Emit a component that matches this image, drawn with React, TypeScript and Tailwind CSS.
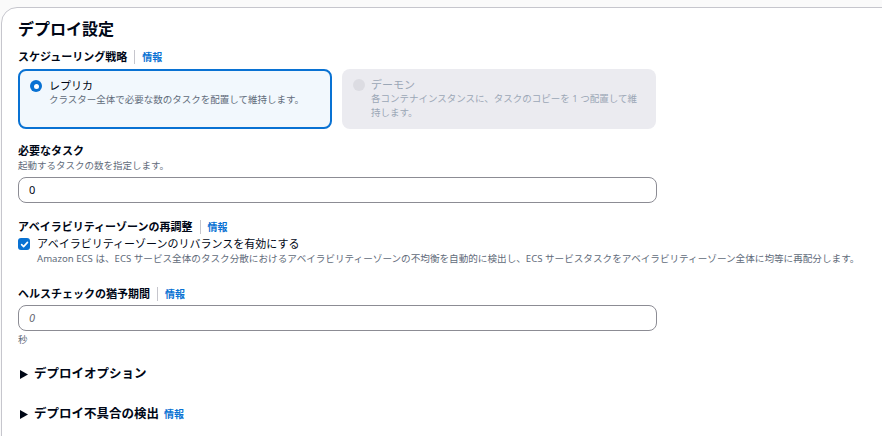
import React from "react";

const font = "font-['Noto_Sans','Noto_Sans_CJK_JP',sans-serif]";

function Info() {
  return (
    <span className="flex items-center">
      <span className="mx-[7px] h-[14px] w-px bg-[#c6c6cd]" />
      <span className="text-[10px] font-bold text-[#0972d3]">情報</span>
    </span>
  );
}

function Label({ text, info }: { text: string; info?: boolean }) {
  return (
    <div className="flex h-[16px] items-center text-[11px] font-bold leading-[16px] text-[#000716]">
      {text}
      {info && <Info />}
    </div>
  );
}

function Expander({ text, info }: { text: string; info?: boolean }) {
  return (
    <div className="flex h-[18px] items-center text-[12.5px] font-bold text-[#000716]">
      <svg width="8" height="9" viewBox="0 0 8 9" className="ml-[2px] mr-[6px]">
        <path d="M0 0 L8 4.5 L0 9 Z" fill="#000716" />
      </svg>
      {text}
      {info && <span className="ml-[5px] text-[10px] font-bold text-[#0972d3]">情報</span>}
    </div>
  );
}

export default function App() {
  return (
    <div className={`${font} h-[436px] w-[882px] overflow-hidden bg-[#fafafa] pl-[1px] pt-[7px]`}>
      <div className="h-[440px] w-[900px] rounded-tl-[16px] border border-[#c6c6cd] bg-white pl-[16px] pt-[11px]">
        <h2 className="h-[20px] text-[16px] font-bold leading-[20px] text-[#000716]">デプロイ設定</h2>

        <div className="mt-[10px]">
          <Label text="スケジューリング戦略" info />
        </div>

        <div className="mt-[4px] flex gap-[10px]">
          <div className="flex h-[60px] w-[314px] gap-[7px] rounded-[8px] border-2 border-[#0972d3] bg-[#f2f8fd] pl-[10px] pt-[7px]">
            <span className="mt-[2px] flex h-[12px] w-[12px] shrink-0 items-center justify-center rounded-full bg-[#0972d3]">
              <span className="h-[5px] w-[5px] rounded-full bg-white" />
            </span>
            <div>
              <div className="text-[11px] leading-[15px] text-[#000716]">レプリカ</div>
              <div className="text-[9.5px] leading-[14px] text-[#5f6b7a]">クラスター全体で必要な数のタスクを配置して維持します。</div>
            </div>
          </div>
          <div className="flex h-[60px] w-[314px] gap-[6px] rounded-[8px] bg-[#ebebf0] pl-[11px] pr-[10px] pt-[8px]">
            <span className="mt-[2px] h-[12px] w-[12px] shrink-0 rounded-full bg-[#dcdce2]" />
            <div>
              <div className="text-[11px] leading-[15px] text-[#9ba7b6]">デーモン</div>
              <div className="text-[9.5px] leading-[14px] text-[#9ba7b6]">各コンテナインスタンスに、タスクのコピーを 1 つ配置して維持します。</div>
            </div>
          </div>
        </div>

        <div className="mt-[14px]">
          <Label text="必要なタスク" />
        </div>
        <div className="h-[14px] text-[9.5px] leading-[14px] text-[#5f6b7a]">起動するタスクの数を指定します。</div>
        <div className="mt-[4px] flex h-[26px] w-[639px] items-center rounded-[8px] border border-[#8c8c94] pl-[10px] text-[11px] text-[#000716]">
          0
        </div>

        <div className="mt-[16px]">
          <Label text="アベイラビリティーゾーンの再調整" info />
        </div>
        <div className="mt-[1px] flex h-[16px] items-center gap-[7px]">
          <span className="flex h-[12px] w-[12px] items-center justify-center rounded-[3px] bg-[#0972d3]">
            <svg width="9" height="9" viewBox="0 0 10 10">
              <path d="M1.8 5.2 L4 7.4 L8.3 2.6" fill="none" stroke="white" strokeWidth="1.8" strokeLinecap="round" strokeLinejoin="round" />
            </svg>
          </span>
          <span className="text-[11px] text-[#000716]">アベイラビリティーゾーンのリバランスを有効にする</span>
        </div>
        <div className="ml-[19px] h-[14px] text-[9.6px] leading-[14px] text-[#5f6b7a]">
          Amazon ECS は、ECS サービス全体のタスク分散におけるアベイラビリティーゾーンの不均衡を自動的に検出し、ECS サービスタスクをアベイラビリティーゾーン全体に均等に再配分します。
        </div>

        <div className="mt-[20px]">
          <Label text="ヘルスチェックの猶予期間" info />
        </div>
        <div className="mt-[3px] flex h-[26px] w-[639px] items-center rounded-[8px] border border-[#8c8c94] pl-[10px] text-[11px] italic text-[#656871]">
          0
        </div>
        <div className="mt-[2px] h-[14px] text-[9.5px] leading-[14px] text-[#5f6b7a]">秒</div>

        <div className="mt-[18px]">
          <Expander text="デプロイオプション" />
        </div>
        <div className="mt-[22px]">
          <Expander text="デプロイ不具合の検出" info />
        </div>
      </div>
    </div>
  );
}
